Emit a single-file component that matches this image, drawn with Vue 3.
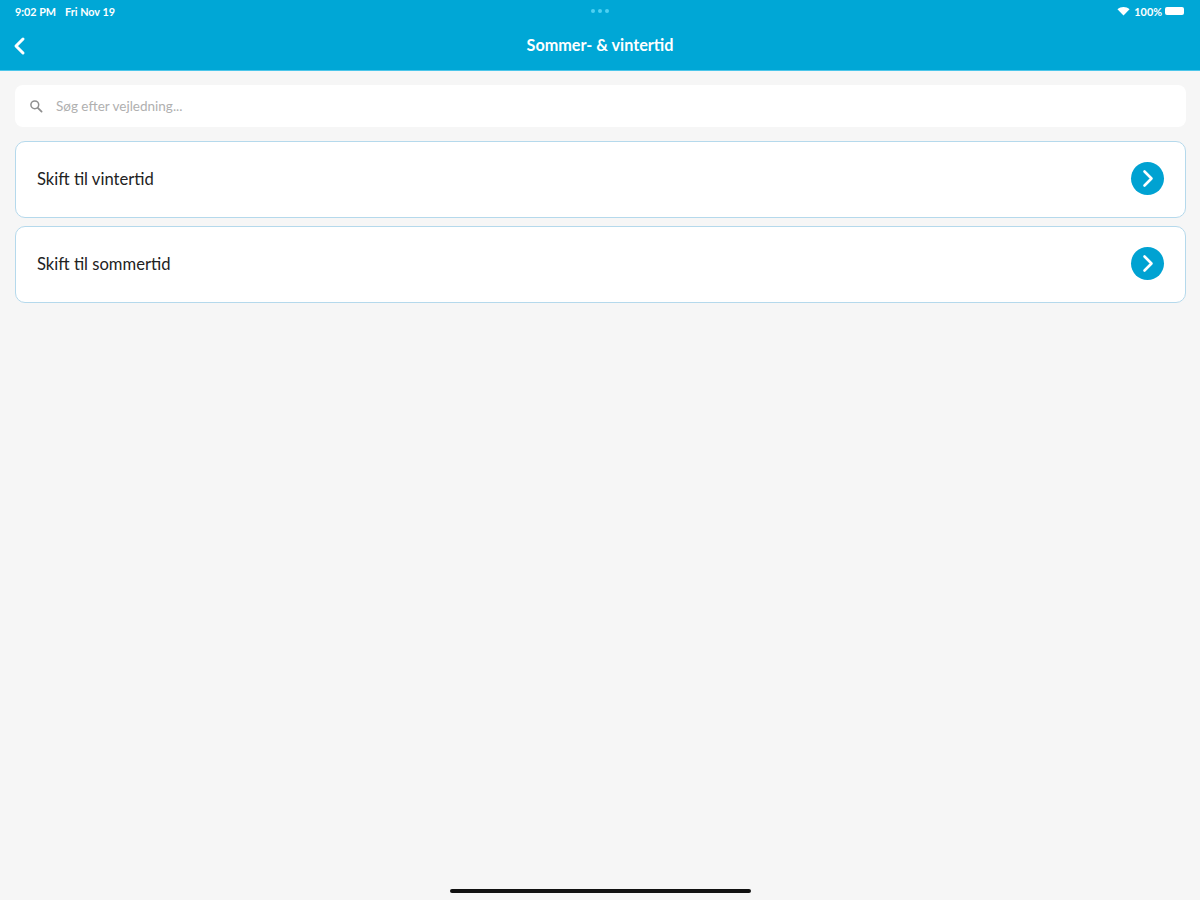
<template>
  <div class="screen">
    <header class="header">
      <div class="status-bar">
        <div class="status-left">
          <span>9:02 PM</span>
          <span>Fri Nov 19</span>
        </div>
        <div class="dots"><i></i><i></i><i></i></div>
        <div class="status-right">
          <svg class="wifi" viewBox="0 0 14 10" width="13" height="10">
            <path d="M0.5 3.2C4.2 0 9.8 0 13.5 3.2L7 9.8Z" fill="#fff" />
          </svg>
          <span>100%</span>
          <span class="battery"></span>
        </div>
      </div>
      <div class="nav-bar">
        <svg class="back" viewBox="0 0 14 20" width="14" height="20">
          <path d="M11 3L4 10L11 17" fill="none" stroke="#fff" stroke-width="3" stroke-linecap="round" stroke-linejoin="round" />
        </svg>
        <h1 class="title">Sommer- &amp; vintertid</h1>
      </div>
    </header>

    <main class="content">
      <div class="search">
        <svg viewBox="0 0 14 14" width="14" height="14">
          <circle cx="5.8" cy="5.8" r="3.9" fill="none" stroke="#8f8f8f" stroke-width="1.5" />
          <path d="M8.8 8.8L12.6 12.6" stroke="#8f8f8f" stroke-width="1.8" stroke-linecap="round" />
        </svg>
        <span class="placeholder">Søg efter vejledning...</span>
      </div>

      <div class="list">
        <div v-for="item in items" :key="item" class="row">
          <span class="row-label">{{ item }}</span>
          <span class="row-btn">
            <svg viewBox="0 0 33 33" width="33" height="33">
              <path d="M13.5 9.5L20.5 16.5L13.5 23.5" fill="none" stroke="#fff" stroke-width="2.6" stroke-linecap="round" stroke-linejoin="round" />
            </svg>
          </span>
        </div>
      </div>
    </main>

    <div class="home-bar"></div>
  </div>
</template>

<script setup>
const items = ["Skift til vintertid", "Skift til sommertid"];
</script>

<style>
html,
body {
  margin: 0;
  background: #f6f6f6;
}
</style>

<style scoped>
.screen {
  height: 900px;
  display: flex;
  flex-direction: column;
  background: #f6f6f6;
  font-family: "Lato", "Liberation Sans", sans-serif;
  overflow: hidden;
}

.header {
  height: 71px;
  box-sizing: border-box;
  background: #00a7d6;
  border-bottom: 1px solid #4cc6ea;
  color: #fff;
}

.status-bar {
  height: 22px;
  padding: 0 15px;
  display: grid;
  grid-template-columns: 1fr auto 1fr;
  align-items: center;
  font-size: 10.8px;
  font-weight: 700;
}

.status-left {
  display: flex;
  gap: 9px;
}

.dots {
  display: flex;
  gap: 3px;
}

.dots i {
  width: 4px;
  height: 4px;
  border-radius: 50%;
  background: #4fd0f2;
}

.status-right {
  display: flex;
  justify-content: flex-end;
  align-items: center;
  gap: 3px;
}

.wifi {
  margin-right: 1px;
}

.battery {
  width: 19px;
  height: 8px;
  border-radius: 2px;
  background: #fff;
  margin-right: 1px;
}

.nav-bar {
  height: 47px;
  display: flex;
  align-items: center;
  justify-content: center;
  position: relative;
}

.back {
  position: absolute;
  left: 12px;
  top: 14px;
}

.title {
  margin: 0;
  font-size: 16.2px;
  font-weight: 700;
  line-height: 1;
}

.content {
  padding: 14px 14px 0 15px;
}

.search {
  height: 42px;
  box-sizing: border-box;
  padding-left: 14px;
  display: flex;
  align-items: center;
  gap: 13px;
  background: #fff;
  border-radius: 8px;
}

.placeholder {
  font-size: 13.5px;
  color: #b0b0b0;
}

.list {
  margin-top: 14px;
  display: flex;
  flex-direction: column;
  gap: 8px;
}

.row {
  height: 77px;
  box-sizing: border-box;
  padding: 0 21px 2px 21px;
  display: flex;
  align-items: center;
  justify-content: space-between;
  background: #fff;
  border: 1.5px solid #b5d9ec;
  border-radius: 10px;
}

.row-label {
  font-size: 16.6px;
  color: #222;
}

.row-btn {
  width: 33px;
  height: 33px;
  border-radius: 50%;
  background: #00a2d2;
}

.row-btn svg {
  display: block;
}

.home-bar {
  position: absolute;
  left: 450px;
  top: 889px;
  width: 301px;
  height: 4px;
  background: #111;
  border-radius: 2px;
}
</style>
